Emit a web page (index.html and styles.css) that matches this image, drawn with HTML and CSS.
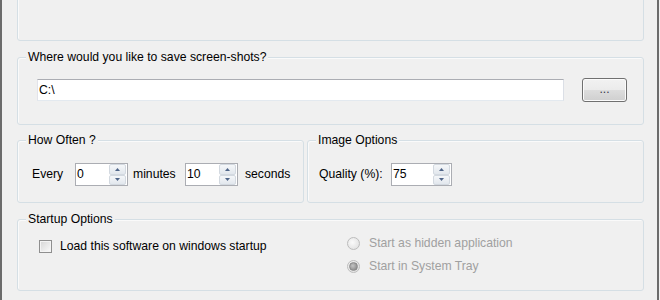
FILE: index.html
```html
<!DOCTYPE html>
<html>
<head>
<meta charset="utf-8">
<link rel="stylesheet" href="styles.css">
</head>
<body>
<div class="window">
  <div class="group top-group"></div>

  <div class="group save-group">
    <div class="group-title">Where would you like to save screen-shots?</div>
    <div class="save-row">
      <div class="textbox">C:\</div>
      <div class="button">...</div>
    </div>
  </div>

  <div class="options-row">
    <div class="group often-group">
      <div class="group-title">How Often ?</div>
      <div class="field-row often-row">
        <span class="lbl lbl-every">Every</span>
        <div class="spinner spin-small">
          <span class="spin-value">0</span>
          <span class="spin-buttons">
            <span class="spin-btn"><svg width="5" height="3" viewBox="0 0 5 3"><path d="M2.5 0L5 3H0z" fill="#4f6588"/></svg></span>
            <span class="spin-btn"><svg width="5" height="3" viewBox="0 0 5 3"><path d="M0 0H5L2.5 3z" fill="#4f6588"/></svg></span>
          </span>
        </div>
        <span class="lbl lbl-minutes">minutes</span>
        <div class="spinner spin-small">
          <span class="spin-value">10</span>
          <span class="spin-buttons">
            <span class="spin-btn"><svg width="5" height="3" viewBox="0 0 5 3"><path d="M2.5 0L5 3H0z" fill="#4f6588"/></svg></span>
            <span class="spin-btn"><svg width="5" height="3" viewBox="0 0 5 3"><path d="M0 0H5L2.5 3z" fill="#4f6588"/></svg></span>
          </span>
        </div>
        <span class="lbl lbl-seconds">seconds</span>
      </div>
    </div>

    <div class="group image-group">
      <div class="group-title">Image Options</div>
      <div class="field-row image-row">
        <span class="lbl lbl-quality">Quality (%):</span>
        <div class="spinner spin-wide">
          <span class="spin-value">75</span>
          <span class="spin-buttons">
            <span class="spin-btn"><svg width="5" height="3" viewBox="0 0 5 3"><path d="M2.5 0L5 3H0z" fill="#4f6588"/></svg></span>
            <span class="spin-btn"><svg width="5" height="3" viewBox="0 0 5 3"><path d="M0 0H5L2.5 3z" fill="#4f6588"/></svg></span>
          </span>
        </div>
      </div>
    </div>
  </div>

  <div class="group startup-group">
    <div class="group-title">Startup Options</div>
    <div class="startup-body">
      <div class="startup-left">
        <div class="check-row">
          <span class="checkbox"></span>
          <span class="check-label">Load this software on windows startup</span>
        </div>
      </div>
      <div class="startup-right">
        <div class="radio-row">
          <span class="radio"></span>
          <span class="radio-label">Start as hidden application</span>
        </div>
        <div class="radio-row">
          <span class="radio checked"></span>
          <span class="radio-label">Start in System Tray</span>
        </div>
      </div>
    </div>
  </div>
</div>
</body>
</html>
```

FILE: styles.css
```css
* { box-sizing: border-box; }

body {
  margin: 0;
  background: #f0f0f0;
  font-family: "Liberation Sans", Arial, sans-serif;
  font-size: 12.2px;
  line-height: 15px;
  color: #000;
}

.window {
  width: 659px;
  height: 300px;
  border-left: 2px solid #6b6b6b;
  border-right: 2px solid #6b6b6b;
  padding: 0 13px 0 15px;
  overflow: hidden;
}

.group {
  border: 1px solid #d5dfe5;
  border-radius: 3px;
  box-shadow: inset 1px 1px 0 #fafafa;
}

.group-title {
  width: fit-content;
  margin: -8px 0 -7px 8px;
  padding: 0 2px;
  background: #f0f0f0;
  line-height: 15px;
}

.top-group {
  height: 51px;
  margin-top: -10px;
}

.save-group {
  margin-top: 16px;
  height: 68px;
}

.save-row {
  display: flex;
  align-items: flex-start;
  padding: 20px 0 0 19px;
}

.textbox {
  width: 527px;
  height: 22px;
  margin-top: 1px;
  background: #fff;
  border: 1px solid;
  border-color: #abadb3 #dbdfe6 #e3e9ef #e2e3ea;
  padding: 3px 0 0 1px;
}

.button {
  width: 45px;
  height: 24px;
  margin-left: 18px;
  border: 1px solid #707070;
  border-radius: 3px;
  background: linear-gradient(#f2f2f2 0%, #ebebeb 50%, #dddddd 50%, #cfcfcf 100%);
  box-shadow: inset 0 0 0 1px #fbfbfb;
  text-align: center;
  line-height: 21px;
  color: #3a3a4a;
}

.options-row {
  display: flex;
  gap: 3px;
  margin-top: 15px;
  height: 63px;
}

.often-group { width: 287px; }
.image-group { flex: 1; }

.field-row {
  display: flex;
  align-items: center;
  padding-top: 22px;
}

.often-row { padding-left: 14px; }
.image-row { padding-left: 11px; }

.lbl-every { width: 43px; }
.lbl-minutes { width: 52px; margin-left: 5px; }
.lbl-seconds { margin-left: 7px; }
.lbl-quality { width: 72px; }

.spinner {
  display: flex;
  height: 23px;
  background: #fff;
  border: 1px solid #abadb3;
}

.spin-small { width: 53px; }
.spin-wide { width: 61px; }

.spin-value {
  flex: 1;
  padding-left: 1px;
  line-height: 21px;
}

.spin-buttons {
  width: 17px;
  margin: 0 1px 0 0;
  display: flex;
  flex-direction: column;
}

.spin-btn {
  flex: 1;
  display: flex;
  align-items: center;
  justify-content: center;
  border: 1px solid #d3d9e0;
  border-radius: 2px;
  background: linear-gradient(#f5f7f9, #e2e7ed);
}

.startup-group {
  margin-top: 16px;
  height: 72px;
}

.startup-body {
  display: flex;
}

.startup-left {
  width: 329px;
  padding: 20px 0 0 21px;
}

.check-row {
  display: flex;
  align-items: center;
  height: 13px;
}

.checkbox {
  width: 13px;
  height: 13px;
  border: 1px solid #8f8f8f;
  background: linear-gradient(135deg, #d6d6d6, #fbfbfb);
  box-shadow: inset 0 0 0 1px #f4f4f4;
}

.check-label { margin-left: 8px; }

.startup-right {
  display: flex;
  flex-direction: column;
  gap: 8px;
  padding-top: 16px;
}

.radio-row {
  display: flex;
  align-items: center;
  height: 15px;
  color: #a0a0a0;
}

.radio {
  width: 13px;
  height: 13px;
  border-radius: 50%;
  border: 1px solid #bcbcbc;
  background: radial-gradient(circle at 40% 40%, #fafafa, #dcdcdc);
  display: flex;
  align-items: center;
  justify-content: center;
}

.radio.checked::after {
  content: "";
  width: 7px;
  height: 7px;
  border-radius: 50%;
  border: 1px solid #8a8a8a;
  background: radial-gradient(circle at 40% 40%, #c4c4c4, #7c7c7c);
}

.radio-label { margin-left: 9px; }
```
